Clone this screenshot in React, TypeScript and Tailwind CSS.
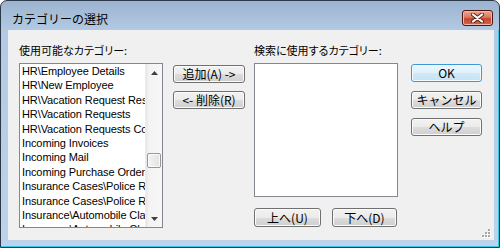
import React from "react";

const items = [
  "HR\\Employee Details",
  "HR\\New Employee",
  "HR\\Vacation Request Results",
  "HR\\Vacation Requests",
  "HR\\Vacation Requests Completed",
  "Incoming Invoices",
  "Incoming Mail",
  "Incoming Purchase Orders",
  "Insurance Cases\\Police Reports",
  "Insurance Cases\\Police Reports",
  "Insurance\\Automobile Claims",
  "Insurance\\Automobile Claims",
  "Insurance\\Automobile Claims",
];

function Btn({
  children,
  className = "",
  primary = false,
}: {
  children: React.ReactNode;
  className?: string;
  primary?: boolean;
}) {
  return (
    <div
      className={
        primary
          ? `flex items-center justify-center rounded-[3px] border border-[#3c9ad6] bg-[linear-gradient(#eaf6fd_0%,#dff1fb_50%,#cfe9f8_50%,#c4e3f5_100%)] shadow-[inset_0_0_0_1px_#f4fbff] text-[12px] leading-none text-black ${className}`
          : `flex items-center justify-center rounded-[3px] border border-[#707070] bg-[linear-gradient(#f2f2f2_0%,#ebebeb_50%,#dddddd_50%,#cfcfcf_100%)] shadow-[inset_0_0_0_1px_#fbfbfb] text-[12px] leading-none text-black ${className}`
      }
    >
      {children}
    </div>
  );
}

function Arrow({ up }: { up: boolean }) {
  return (
    <svg width="7" height="4" viewBox="0 0 7 4">
      {up ? (
        <polygon points="0,4 3.5,0 7,4" fill="#404040" />
      ) : (
        <polygon points="0,0 3.5,4 7,0" fill="#404040" />
      )}
    </svg>
  );
}

export default function App() {
  return (
    <div className="w-[503px] h-[249px] bg-white overflow-hidden font-['Noto_Sans_CJK_JP',sans-serif] text-black">
      <div className="w-[500px] h-[248px] rounded-t-[7px] border border-[#2a3848] bg-[linear-gradient(#9db4d0_0px,#b3cae4_30px,#bdd3eb_100%)] flex flex-col">
        {/* title bar */}
        <div className="h-[29px] flex items-start justify-between shrink-0">
          <div className="ml-[11px] mt-[10px] text-[12px] leading-[16px] whitespace-nowrap">
            カテゴリーの選択
          </div>
          <div className="mr-[6px] mt-[9px] w-[31px] h-[16px] rounded-[3px] border border-[#4d1710] bg-[linear-gradient(#e9a898_0%,#d9785f_45%,#c7442c_55%,#d0684a_100%)] shadow-[inset_0_0_0_1px_#f0b8a8] flex items-center justify-center">
            <svg width="13" height="10" viewBox="0 0 13 10">
              <path d="M2 1.5 L11 8.5 M11 1.5 L2 8.5" stroke="#5a2418" strokeWidth="4" strokeLinecap="round" />
              <path d="M2 1.5 L11 8.5 M11 1.5 L2 8.5" stroke="#ffffff" strokeWidth="2.2" strokeLinecap="round" />
            </svg>
          </div>
        </div>
        {/* body with frame */}
        <div className="flex flex-1 pl-[7px] pr-[4px] pb-[6px] border-r border-b border-r-[#3cc6e4] border-b-[#3cc6e4]">
          <div className="relative w-[486px] h-[210px] bg-[#f0f0f0] flex pl-[11px] pt-[13px]">
            {/* column 1 */}
            <div className="w-[144px] flex flex-col">
              <div className="h-[14px] text-[11px] leading-[14px] whitespace-nowrap [font-feature-settings:'palt']">
                使用可能なカテゴリー:
              </div>
              <div className="mt-[6px] h-[165px] border border-[#828790] bg-white flex">
                <div className="w-[125px] overflow-hidden pl-[2px] font-['Liberation_Sans',sans-serif] text-[11px] tracking-[-0.1px]">
                  {items.map((t, i) => (
                    <div key={i} className="h-[14.4px] leading-[14.4px] whitespace-nowrap">
                      {t}
                    </div>
                  ))}
                </div>
                <div className="w-[17px] flex flex-col bg-[linear-gradient(to_right,#e6e6e6_0px,#f3f3f3_3px,#f7f7f7_100%)] border-l border-[#ececec]">
                  <div className="h-[17px] flex items-center justify-center">
                    <Arrow up />
                  </div>
                  <div className="flex-1 flex flex-col">
                    <div className="h-[72px]" />
                    <div className="mx-[1px] h-[15px] rounded-[2px] border border-[#979797] bg-[linear-gradient(to_right,#f4f4f4,#e2e2e2)] shadow-[inset_0_0_0_1px_#fbfbfb]" />
                  </div>
                  <div className="h-[17px] flex items-center justify-center">
                    <Arrow up={false} />
                  </div>
                </div>
              </div>
            </div>
            {/* column 2 */}
            <div className="ml-[10px] w-[72px] pt-[22px] flex flex-col gap-[8px]">
              <Btn className="h-[18px]">追加(A) -&gt;</Btn>
              <Btn className="h-[18px]">&lt;- 削除(R)</Btn>
            </div>
            {/* column 3 */}
            <div className="ml-[9px] w-[144px] flex flex-col">
              <div className="h-[14px] text-[11px] leading-[14px] whitespace-nowrap [font-feature-settings:'palt']">
                検索に使用するカテゴリー:
              </div>
              <div className="mt-[6px] h-[134px] border border-[#828790] bg-white" />
              <div className="mt-[11px] flex gap-[11px]">
                <Btn className="w-[67px] h-[19px]">上へ(U)</Btn>
                <Btn className="w-[65px] h-[19px]">下へ(D)</Btn>
              </div>
            </div>
            {/* column 4 */}
            <div className="ml-[13px] w-[71px] pt-[21px] flex flex-col gap-[9px]">
              <Btn primary className="h-[18px]">OK</Btn>
              <Btn className="h-[18px]">キャンセル</Btn>
              <Btn className="h-[18px]">ヘルプ</Btn>
            </div>
            {/* size grip */}
            <svg className="absolute right-[3px] bottom-[2px]" width="9" height="9" viewBox="0 0 9 9">
              {[
                [6, 0],
                [3, 3],
                [6, 3],
                [0, 6],
                [3, 6],
                [6, 6],
              ].map(([x, y], i) => (
                <g key={i}>
                  <rect x={x + 1} y={y + 1} width="2" height="2" fill="#ffffff" />
                  <rect x={x} y={y} width="2" height="2" fill="#a8a8a8" />
                </g>
              ))}
            </svg>
          </div>
        </div>
      </div>
    </div>
  );
}
